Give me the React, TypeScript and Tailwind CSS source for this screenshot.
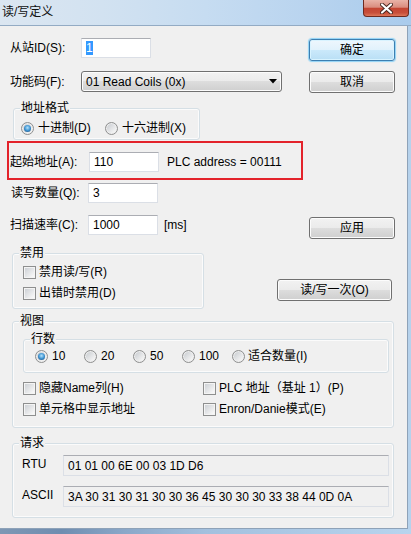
import React from "react";

const btnBase =
  "flex items-center justify-center rounded-[3px] border border-[#707070] bg-[linear-gradient(to_bottom,#f2f2f2_0%,#ebebeb_49%,#dddddd_50%,#cfcfcf_100%)] shadow-[inset_0_0_0_1px_#fcfcfc] leading-[14px] text-black";

function Btn({ children, className }: { children: React.ReactNode; className: string }) {
  return <div className={`${btnBase} ${className}`}>{children}</div>;
}

function TextBox({ children, className }: { children?: React.ReactNode; className: string }) {
  return (
    <div
      className={`flex items-center border border-[#dbdfe6] border-t-[#abadb3] pl-[4px] leading-[14px] ${className}`}
    >
      {children}
    </div>
  );
}

function Radio({ checked }: { checked?: boolean }) {
  return (
    <span className="flex h-[13px] w-[13px] shrink-0 items-center justify-center rounded-full border border-[#8e8f8f] bg-[linear-gradient(135deg,#c3c7cc_0%,#f7f7f7_85%)] shadow-[inset_0_0_0_1px_#eeeeee]">
      {checked && (
        <span className="h-[7px] w-[7px] rounded-full bg-[radial-gradient(circle_at_50%_40%,#b5e3fb_0%,#3f95d3_50%,#163f6b_100%)]" />
      )}
    </span>
  );
}

function Check() {
  return (
    <span className="h-[13px] w-[13px] shrink-0 border border-[#8e8f8f] bg-[linear-gradient(135deg,#c9cdd2_0%,#f7f7f7_85%)] shadow-[inset_0_0_0_1px_#f4f4f4]" />
  );
}

function Group({
  title,
  className,
  children,
}: {
  title: string;
  className: string;
  children?: React.ReactNode;
}) {
  return (
    <div
      className={`relative rounded-[3px] border border-[#d5dfe5] shadow-[inset_0_0_0_1px_#fbfbfb] ${className}`}
    >
      <span className="absolute left-[6px] top-[-8px] bg-[#f0f0f0] px-[1px] leading-[14px]">
        {title}
      </span>
      {children}
    </div>
  );
}

export default function App() {
  return (
    <div className="h-[534px] w-[411px] overflow-hidden bg-[#b6d2ec] font-['Liberation_Sans','Noto_Sans_CJK_SC',sans-serif] text-[12px] text-black">
      {/* Title bar */}
      <div className="flex h-[26px] items-start border-b border-[#93abc4] bg-[linear-gradient(90deg,#dbe6f1_0%,#d2e2f1_25%,#c6dcf1_50%,#b9d4ef_75%,#a9cbec_100%)]">
        <span className="ml-[2px] mt-[5px] leading-[14px] text-[#111]">读/写定义</span>
        <div className="ml-auto mr-[2px] flex h-[17px] w-[46px] items-center justify-center rounded-b-[4px] border border-t-0 border-[#6e2a1f] bg-[linear-gradient(to_bottom,#e9b3a7_0%,#da8d7f_45%,#c44532_52%,#c84f3a_80%,#de7658_100%)]">
          <svg width="13" height="11" viewBox="0 0 13 11">
            <path d="M2 1.5 L11 9.5 M11 1.5 L2 9.5" stroke="#47261f" strokeWidth="4" strokeLinecap="round" />
            <path d="M2 1.5 L11 9.5 M11 1.5 L2 9.5" stroke="#ffffff" strokeWidth="2.2" strokeLinecap="round" />
          </svg>
        </div>
      </div>

      {/* Client area */}
      <div className="flex h-[503px] w-[408px] flex-col border-b border-r border-[#8ea2b8] bg-[#f0f0f0]">
        {/* Row: station id */}
        <div className="mt-[12px] flex">
          <div className="flex h-[20px] w-[309px] items-center">
            <span className="w-[81px] pl-[10px] leading-[14px]">从站ID(S):</span>
            <TextBox className="h-[20px] w-[70px] bg-white">
              <span className="bg-[#3399ff] text-white">1</span>
            </TextBox>
          </div>
          <div className="mt-[1px] flex h-[22px] w-[86px] items-center justify-center rounded-[3px] border border-[#3c7fb1] bg-[linear-gradient(to_bottom,#eef7fd_0%,#e1f2fc_49%,#cbe9fb_50%,#b9dff5_100%)] shadow-[inset_0_0_0_1px_#d8f3ff,0_0_1px_1px_#8fd2f5] leading-[14px]">
            确定
          </div>
        </div>

        {/* Row: function code */}
        <div className="mt-[10px] flex">
          <div className="flex h-[21px] w-[309px] items-center">
            <span className="w-[81px] pl-[10px] leading-[14px]">功能码(F):</span>
            <div className={`${btnBase} h-[21px] w-[201px] !justify-between pl-[4px] pr-[4px]`}>
              <span>01 Read Coils (0x)</span>
              <svg width="8" height="5" viewBox="0 0 8 5">
                <path d="M0 0 H8 L4 4.5 Z" fill="#000" />
              </svg>
            </div>
          </div>
          <Btn className="h-[22px] w-[86px]">取消</Btn>
        </div>

        {/* Address format group */}
        <Group title="地址格式" className="ml-[13px] mt-[15px] h-[32px] w-[187px]">
          <div className="flex pl-[7px] pt-[11px]">
            <div className="flex h-[16px] w-[84px] items-center gap-[4px]">
              <Radio checked />
              <span className="leading-[14px]">十进制(D)</span>
            </div>
            <div className="flex h-[16px] items-center gap-[4px]">
              <Radio />
              <span className="leading-[14px]">十六进制(X)</span>
            </div>
          </div>
        </Group>

        {/* Start address (highlighted) */}
        <div className="ml-[7px] mt-[1px] h-[39px] w-[296px] border-2 border-[#e3232b] pl-[1px] pt-[9px]">
          <div className="flex h-[20px] items-center">
            <span className="w-[79px] leading-[14px]">起始地址(A):</span>
            <TextBox className="h-[20px] w-[70px] bg-white">110</TextBox>
            <span className="ml-[8px] leading-[14px]">PLC address = 00111</span>
          </div>
        </div>

        {/* Quantity */}
        <div className="mt-[3px] flex h-[20px] items-center">
          <span className="w-[88px] pl-[11px] leading-[14px]">读写数量(Q):</span>
          <TextBox className="h-[20px] w-[70px] bg-white">3</TextBox>
        </div>

        {/* Scan rate */}
        <div className="mt-[12px] flex">
          <div className="flex h-[20px] w-[309px] items-center">
            <span className="w-[88px] pl-[10px] leading-[14px]">扫描速率(C):</span>
            <TextBox className="h-[20px] w-[70px] bg-white">1000</TextBox>
            <span className="ml-[6px] leading-[14px]">[ms]</span>
          </div>
          <Btn className="mt-[2px] h-[22px] w-[86px]">应用</Btn>
        </div>

        {/* Disable group + read once */}
        <div className="mt-[14px] flex">
          <Group title="禁用" className="ml-[12px] h-[56px] w-[192px]">
            <div className="flex flex-col gap-[5px] pl-[10px] pt-[10px]">
              <div className="flex h-[16px] items-center gap-[3px]">
                <Check />
                <span className="leading-[14px]">禁用读/写(R)</span>
              </div>
              <div className="flex h-[16px] items-center gap-[3px]">
                <Check />
                <span className="leading-[14px]">出错时禁用(D)</span>
              </div>
            </div>
          </Group>
          <Btn className="ml-[73px] mt-[26px] h-[22px] w-[115px]">读/写一次(O)</Btn>
        </div>

        {/* View group */}
        <Group title="视图" className="ml-[12px] mt-[12px] h-[107px] w-[382px]">
          <div className="ml-[10px] mt-[17px]">
            <Group title="行数" className="h-[34px] w-[366px]">
              <div className="flex pl-[11px] pt-[8px]">
                <div className="flex h-[16px] w-[49px] items-center gap-[4px]">
                  <Radio checked />
                  <span className="leading-[14px]">10</span>
                </div>
                <div className="flex h-[16px] w-[49px] items-center gap-[4px]">
                  <Radio />
                  <span className="leading-[14px]">20</span>
                </div>
                <div className="flex h-[16px] w-[49px] items-center gap-[4px]">
                  <Radio />
                  <span className="leading-[14px]">50</span>
                </div>
                <div className="flex h-[16px] w-[50px] items-center gap-[4px]">
                  <Radio />
                  <span className="leading-[14px]">100</span>
                </div>
                <div className="flex h-[16px] items-center gap-[3px]">
                  <Radio />
                  <span className="leading-[14px]">适合数量(I)</span>
                </div>
              </div>
            </Group>
          </div>
          <div className="ml-[10px] mt-[7px] flex flex-col gap-[5px]">
            <div className="flex h-[16px] items-center">
              <div className="flex w-[180px] items-center gap-[3px]">
                <Check />
                <span className="leading-[14px]">隐藏Name列(H)</span>
              </div>
              <div className="flex items-center gap-[3px]">
                <Check />
                <span className="leading-[14px]">PLC 地址（基址 1）(P)</span>
              </div>
            </div>
            <div className="flex h-[16px] items-center">
              <div className="flex w-[180px] items-center gap-[3px]">
                <Check />
                <span className="leading-[14px]">单元格中显示地址</span>
              </div>
              <div className="flex items-center gap-[3px]">
                <Check />
                <span className="leading-[14px]">Enron/Danie模式(E)</span>
              </div>
            </div>
          </div>
        </Group>

        {/* Request group */}
        <Group title="请求" className="ml-[12px] mt-[15px] h-[75px] w-[382px]">
          <div className="ml-[9px] mt-[11px] flex">
            <span className="w-[41px] pt-[2px] leading-[14px]">RTU</span>
            <TextBox className="h-[21px] w-[326px] bg-[#f0f0f0]">01 01 00 6E 00 03 1D D6</TextBox>
          </div>
          <div className="ml-[9px] mt-[10px] flex">
            <span className="w-[41px] pt-[2px] leading-[14px]">ASCII</span>
            <TextBox className="h-[21px] w-[326px] bg-[#f0f0f0]">
              3A 30 31 30 31 30 30 36 45 30 30 30 33 38 44 0D 0A
            </TextBox>
          </div>
        </Group>
      </div>

      {/* Bottom frame */}
      <div className="h-[6px] w-[411px] bg-[linear-gradient(90deg,#7e97b4_0%,#6f8db0_15%,#8aa7c8_30%,#a3c0de_50%,#b8d4ee_100%)]" />
    </div>
  );
}
